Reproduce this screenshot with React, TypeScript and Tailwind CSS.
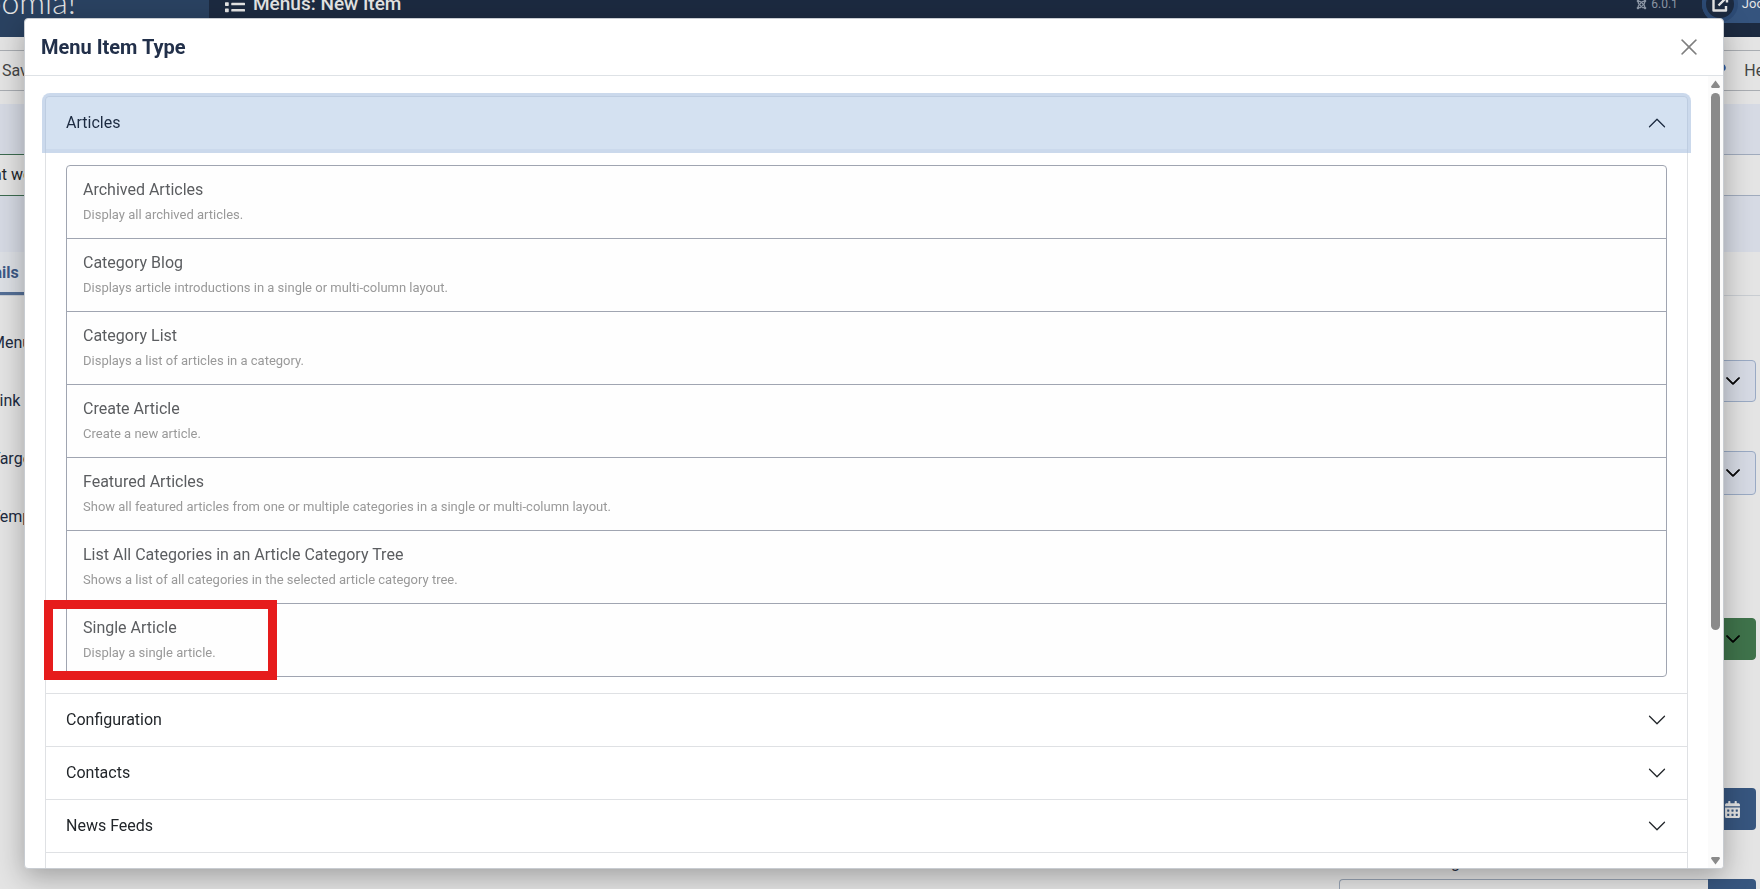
import { useState } from 'react';
import type { ReactNode } from 'react';
import { BsChevronDown, BsXLg } from 'react-icons/bs';
import { FaCalendarAlt, FaJoomla, FaList, FaQuestion } from 'react-icons/fa';

const articleTypes = [
  { title: 'Archived Articles', desc: 'Display all archived articles.' },
  { title: 'Category Blog', desc: 'Displays article introductions in a single or multi-column layout.' },
  { title: 'Category List', desc: 'Displays a list of articles in a category.' },
  { title: 'Create Article', desc: 'Create a new article.' },
  { title: 'Featured Articles', desc: 'Show all featured articles from one or multiple categories in a single or multi-column layout.' },
  { title: 'List All Categories in an Article Category Tree', desc: 'Shows a list of all categories in the selected article category tree.' },
  { title: 'Single Article', desc: 'Display a single article.', marked: true },
];

const groups = ['Articles', 'Configuration', 'Contacts', 'News Feeds', 'Smart Search'];

const detailLabels = ['Menu Item Type', 'Link', 'Target Window', 'Template Style'];

function Field({ id, label, className, children }: { id: string; label: string; className: string; children: ReactNode }) {
  return (
    <div className={className}>
      <label htmlFor={id} className="block leading-6 mb-1">{label}</label>
      {children}
    </div>
  );
}

function SelectBox({ id, value, className }: { id: string; value: string; className: string }) {
  return (
    <div className="relative">
      <select id={id} className={`block w-full appearance-none rounded-sm border px-3 ${className}`}>
        <option>{value}</option>
      </select>
      <BsChevronDown size={16} strokeWidth={1} className="absolute right-[15px] top-1/2 -translate-y-1/2 text-black pointer-events-none" />
    </div>
  );
}

function DateBox({ id }: { id: string }) {
  return (
    <div className="flex h-[42px]">
      <input id={id} type="text" className="min-w-0 flex-1 rounded-l-sm border border-r-0 border-[#98a4b4] px-3" />
      <button type="button" aria-label="Open the calendar" className="w-12 rounded-r-sm bg-[#37567f] flex items-center justify-center text-[#e4e4e4]">
        <FaCalendarAlt size={17} />
      </button>
    </div>
  );
}

function EditPage() {
  return (
    <div className="h-screen overflow-hidden bg-[#e4e4e4]">
      {/* Header */}
      <header className="-mt-[35px] h-[72px] flex bg-[#1c2a40] text-[#e4e4e4]">
        <div className="w-[209px] shrink-0 bg-[#2a4261] flex">
          <span className="-ml-[29px] mt-[13px] font-[Lato] font-light text-[32px] leading-[48px]">Joomla!</span>
        </div>
        <div className="flex-1 flex items-center gap-2 pl-4 h-[78px]">
          <FaList size={20} />
          <h1 className="text-[19px] font-medium">Menus: New Item</h1>
        </div>
        <div className="flex items-center h-[78px] -mr-9">
          <span className="flex items-center gap-1 text-xs text-[#8d97a6]">
            <FaJoomla size={11} />
            6.0.1
          </span>
          <a href="#" className="ml-6 flex items-center gap-1 h-[38px] rounded-l-full bg-[#35547e] text-[13px]">
            <span className="size-9 rounded-full border-4 border-[#2c4a74] bg-[#1c2a40] flex items-center justify-center">
              <svg width="18" height="18" viewBox="0 0 18 18" fill="none" stroke="currentColor" strokeWidth="2.4" strokeLinejoin="round">
                <path d="M7.5 3H2.5V15.5H15V11M10.5 2.2H16V7.5M15.5 2.5 7.5 10.5" />
              </svg>
            </span>
            Joomla 6
          </a>
        </div>
      </header>

      {/* Toolbar */}
      <div className="h-[67px] pt-[13px] flex justify-between items-start text-[#444] shadow-sm">
        <button type="button" className="-ml-[35px] h-[41px] pl-9 pr-4 border border-[#a9adb2]">Save</button>
        <button type="button" className="-mr-[34px] h-[41px] px-4 border border-[#a9adb2] flex items-center gap-4">
          <FaQuestion size={16} className="text-[#2a5aa0]" />
          Help
        </button>
      </div>

      {/* Title and alias */}
      <div className="bg-[#d6dae4] pt-[50px] pb-14 flex gap-6 overflow-hidden">
        <input type="text" aria-label="Title" defaultValue="What we do" className="-ml-[43px] flex-1 h-[42px] px-3 pb-0.5 border border-[#3c6b50] bg-[#e4e4e4] text-[#22262a]" />
        <input type="text" aria-label="Alias" className="-mr-10 flex-1 h-[42px] px-3 border border-[#a0abbd] bg-[#e4e4e4]" />
      </div>

      <nav className="h-11 border-b border-[#c9cdd2] flex">
        <button type="button" className="-ml-[47px] px-4 h-[43px] pt-0.5 border-b-3 border-[#546f96] font-bold text-[#3e5a86] bg-[#dde0e5]">Details</button>
      </nav>

      <div className="flex justify-between text-[#1c2a40]">
        <div className="pt-[18px] -ml-[9px]">
          {detailLabels.map((label) => (
            <div key={label} className="h-[58px] flex items-center">{label}</div>
          ))}
        </div>
        <div className="w-[421px] pr-1">
          <Field id="parent" label="Parent Item" className="pt-9">
            <SelectBox id="parent" value="Menu Item Root" className="h-[42px] border-[#9aaac4] bg-[#d6dae4]" />
          </Field>
          <Field id="ordering" label="Ordering" className="mt-[21px]">
            <SelectBox id="ordering" value="Ordering" className="h-11 border-[#9aaac4] bg-[#d6dae4]" />
          </Field>
          <Field id="status" label="Status" className="mt-[95px]">
            <SelectBox id="status" value="Published" className="h-[42px] border-[#3f734b] bg-[#3f734b]" />
          </Field>
          <Field id="start" label="Start Publishing" className="mt-[100px]">
            <DateBox id="start" />
          </Field>
          <Field id="finish" label="Finish Publishing" className="mt-[21px]">
            <DateBox id="finish" />
          </Field>
        </div>
      </div>
    </div>
  );
}

function ArticleList() {
  return (
    <ul className="mx-5 mt-4 mb-4 rounded-sm border border-[#a0a5b1] divide-y divide-[#a0a5b1] bg-[#fefefe]">
      {articleTypes.map((type) => (
        <li key={type.title} className="relative">
          <a href="#" className="block px-4 pt-3 pb-[11px]">
            <span className="block leading-6 text-[#5b5d60]">{type.title}</span>
            <span className="block pt-px leading-6 text-[13px] text-[#999]">{type.desc}</span>
          </a>
          {type.marked && (
            <span className="absolute -left-[23px] -top-1 w-[233px] h-20 border-9 border-[#e61c1c] pointer-events-none" />
          )}
        </li>
      ))}
    </ul>
  );
}

function MenuTypeModal() {
  const [open, setOpen] = useState('Articles');

  return (
    <div className="fixed inset-0 pl-6 pr-9 pt-[18px] pb-5">
      <div role="dialog" aria-labelledby="modal-title" className="h-full flex flex-col bg-white rounded-sm border border-[#c8ccd1] overflow-hidden shadow-[0_8px_28px_rgba(0,0,0,0.3)]">
        <div className="h-[57px] shrink-0 flex items-center justify-between pl-4 pr-6 border-b border-[#dee2e6]">
          <h2 id="modal-title" className="text-xl font-bold text-[#22304a]">Menu Item Type</h2>
          <button type="button" aria-label="Close" className="text-[#7f7f7f]">
            <BsXLg size={20} strokeWidth={0.4} />
          </button>
        </div>

        <div className="flex-1 min-h-0 flex">
          <div className="flex-1 overflow-y-auto [scrollbar-width:none] px-5 pt-5">
            <div className="border border-[#dfe1e4] rounded-sm divide-y divide-[#dfe1e4]">
              {groups.map((group) => {
                const isOpen = group === open;
                return (
                  <section key={group}>
                    <button
                      type="button"
                      aria-expanded={isOpen}
                      onClick={() => setOpen(isOpen ? '' : group)}
                      className={`w-full h-[52px] px-5 flex items-center justify-between ${
                        isOpen ? 'bg-[#d4e1f1] text-[#1c2a40] rounded-t-sm ring-4 ring-[#a9c0e0]/60' : 'text-[#22262a]'
                      }`}
                    >
                      {group}
                      <BsChevronDown size={20} className={isOpen ? 'rotate-180' : ''} />
                    </button>
                    {isOpen && group === 'Articles' && <ArticleList />}
                  </section>
                );
              })}
            </div>
          </div>

          {/* Scroll track */}
          <div className="w-[15px] shrink-0 bg-[#fbfbfb] flex flex-col items-center gap-[5px] pt-1 pb-[3px] text-[#8a8a8a]">
            <svg width="9" height="8" viewBox="0 0 9 8" fill="currentColor">
              <path d="M4.5 0.5 9 6.5 8.3 8H0.7L0 6.5Z" />
            </svg>
            <div className="w-[9px] grow-[537] rounded-full bg-[#8a8a8a]" />
            <div className="grow-[217]" />
            <svg width="9" height="8" viewBox="0 0 9 8" fill="currentColor">
              <path d="M4.5 7.5 9 1.5 8.3 0H0.7L0 1.5Z" />
            </svg>
          </div>
        </div>
      </div>
    </div>
  );
}

export default function App() {
  return (
    <div className="font-[Roboto,sans-serif] text-base">
      <EditPage />
      <MenuTypeModal />
    </div>
  );
}
